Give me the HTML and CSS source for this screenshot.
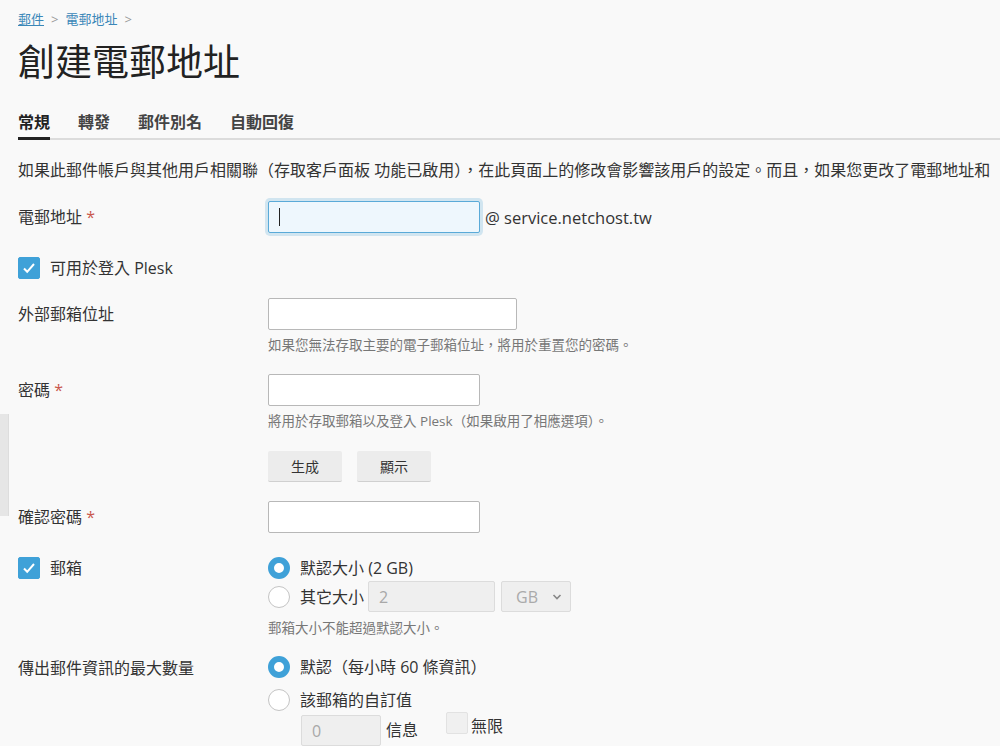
FILE: index.html
```html
<!DOCTYPE html>
<html lang="zh-Hant">
  <head>
    <meta charset="UTF-8" />
    <meta name="viewport" content="width=device-width, initial-scale=1.0" />
    <title>創建電郵地址</title>
    <link rel="stylesheet" href="styles.css">
  </head>
  <body>
    <div class="side-toggle"></div>
    <div class="page">
      <div class="breadcrumb">
        <a href="#" class="crumb underline">郵件</a>
        <span class="sep">&gt;</span>
        <a href="#" class="crumb">電郵地址</a>
        <span class="sep">&gt;</span>
      </div>
      <h1 class="title">創建電郵地址</h1>

      <div class="tabs">
        <span class="tab active">常規</span>
        <span class="tab">轉發</span>
        <span class="tab">郵件別名</span>
        <span class="tab">自動回復</span>
      </div>

      <p class="intro">如果此郵件帳戶與其他用戶相關聯（存取客戶面板 功能已啟用），在此頁面上的修改會影響該用戶的設定。而且，如果您更改了電郵地址和</p>

      <div class="row row-email">
        <div class="label">電郵地址 <span class="req">*</span></div>
        <div class="field inline">
          <div class="input focus"><span class="caret"></span></div>
          <span class="domain">@ service.netchost.tw</span>
        </div>
      </div>

      <div class="row row-check">
        <span class="checkbox checked">
          <svg width="16" height="16" viewBox="0 0 16 16"><path d="M3 8.5l3.2 3.3L13 4" fill="none" stroke="#fff" stroke-width="2"/></svg>
        </span>
        <span class="check-label">可用於登入 Plesk</span>
      </div>

      <div class="row row-ext">
        <div class="label">外部郵箱位址</div>
        <div class="field">
          <div class="input wide"></div>
          <div class="hint">如果您無法存取主要的電子郵箱位址，將用於重置您的密碼。</div>
        </div>
      </div>

      <div class="row row-pass">
        <div class="label">密碼 <span class="req">*</span></div>
        <div class="field">
          <div class="input"></div>
          <div class="hint">將用於存取郵箱以及登入 Plesk（如果啟用了相應選項）。</div>
          <div class="buttons">
            <button class="btn">生成</button>
            <button class="btn">顯示</button>
          </div>
        </div>
      </div>

      <div class="row row-confirm">
        <div class="label">確認密碼 <span class="req">*</span></div>
        <div class="field">
          <div class="input"></div>
        </div>
      </div>

      <div class="row row-mailbox">
        <div class="label check-row">
          <span class="checkbox checked">
            <svg width="16" height="16" viewBox="0 0 16 16"><path d="M3 8.5l3.2 3.3L13 4" fill="none" stroke="#fff" stroke-width="2"/></svg>
          </span>
          <span class="check-label">郵箱</span>
        </div>
        <div class="field">
          <div class="option">
            <span class="radio on"></span>
            <span>默認大小 (2 GB)</span>
          </div>
          <div class="option option-size">
            <span class="radio"></span>
            <span>其它大小</span>
            <div class="input disabled size-input">2</div>
            <div class="select disabled">
              <span>GB</span>
              <svg width="10" height="8" viewBox="0 0 10 8"><path d="M1.5 2l3.5 3.5L8.5 2" fill="none" stroke="#888" stroke-width="1.6"/></svg>
            </div>
          </div>
          <div class="hint">郵箱大小不能超過默認大小。</div>
        </div>
      </div>

      <div class="row row-outgoing">
        <div class="label">傳出郵件資訊的最大數量</div>
        <div class="field">
          <div class="option">
            <span class="radio on"></span>
            <span>默認（每小時 60 條資訊）</span>
          </div>
          <div class="option option-custom">
            <span class="radio"></span>
            <span>該郵箱的自訂值</span>
          </div>
          <div class="limit">
            <div class="input disabled limit-input">0</div>
            <span class="limit-unit">信息</span>
            <span class="checkbox small"></span>
            <span class="unlimited">無限</span>
          </div>
        </div>
      </div>
    </div>
  </body>
</html>
```

FILE: styles.css
```css
body {
  margin: 0;
  padding: 0;
  background: #f9f9f9;
  color: #333;
  font-family: "Open Sans", "Noto Sans CJK TC", sans-serif;
  height: 746px;
  overflow: hidden;
}

.side-toggle {
  position: absolute;
  left: 0;
  top: 414px;
  width: 8px;
  height: 102px;
  background: #e6e6e6;
  border-right: 1px solid #ddd;
}

.page {
  padding: 10px 0 0 18px;
}

.breadcrumb {
  font-size: 13px;
  line-height: 18px;
  display: flex;
  gap: 7px;
}

.crumb {
  color: #3a87b8;
  text-decoration: none;
}

.crumb.underline {
  text-decoration: underline;
}

.sep {
  color: #999;
}

.title {
  margin: 12px 0 0;
  font-size: 37px;
  line-height: 44px;
  font-weight: 400;
  color: #222;
}

.tabs {
  margin-top: 27px;
  display: flex;
  gap: 28px;
  border-bottom: 2px solid #dcdcdc;
}

.tab {
  font-size: 16px;
  line-height: 22px;
  padding-bottom: 5px;
  color: #444;
  font-weight: 600;
  position: relative;
}

.tab.active {
  color: #222;
}

.tab.active::after {
  content: "";
  position: absolute;
  left: 0;
  right: 0;
  bottom: -2px;
  height: 3px;
  background: #222;
}

.intro {
  margin: 19px 0 0;
  font-size: 16px;
  line-height: 22px;
  white-space: nowrap;
  color: #333;
}

.row {
  display: flex;
}

.label {
  width: 250px;
  flex-shrink: 0;
  font-size: 16px;
  line-height: 32px;
  color: #333;
}

.req {
  color: #c9574c;
}

.field {
  display: flex;
  flex-direction: column;
}

.field.inline {
  flex-direction: row;
  align-items: center;
}

.input {
  box-sizing: border-box;
  width: 212px;
  height: 32px;
  background: #fff;
  border: 1px solid #b8b8b8;
  border-radius: 2px;
  font-size: 16px;
  line-height: 30px;
  padding: 0 10px;
}

.input.wide {
  width: 249px;
}

.input.focus {
  background: #eef7fd;
  border-color: #5aaad8;
  box-shadow: 0 0 0 3px rgba(90, 170, 216, 0.25);
  display: flex;
  align-items: center;
}

.caret {
  width: 1px;
  height: 18px;
  background: #222;
}

.input.disabled {
  background: #efefef;
  border-color: #dcdcdc;
  color: #a8a8a8;
}

.domain {
  font-size: 16.5px;
  margin-left: 5px;
  color: #333;
}

.row-email {
  margin-top: 20px;
}

.row-check {
  margin-top: 24px;
  align-items: center;
}

.checkbox {
  box-sizing: border-box;
  width: 22px;
  height: 22px;
  border-radius: 2px;
  display: inline-flex;
  align-items: center;
  justify-content: center;
  background: #fff;
  border: 1px solid #ccc;
}

.checkbox.checked {
  background: #3fa1d8;
  border-color: #3fa1d8;
}

.check-label {
  font-size: 16px;
  line-height: 22px;
  margin-left: 10px;
}

.row-ext {
  margin-top: 19px;
}

.hint {
  margin-top: 7px;
  font-size: 13.5px;
  line-height: 16px;
  color: #777;
}

.row-pass {
  margin-top: 21px;
}

.buttons {
  margin-top: 22px;
  display: flex;
  gap: 15px;
}

.btn {
  font-family: inherit;
  width: 74px;
  height: 31px;
  font-size: 14px;
  color: #333;
  background: #ececec;
  border: none;
  border-bottom: 1px solid #d0d0d0;
  border-radius: 2px;
  padding: 0;
}

.row-confirm {
  margin-top: 19px;
}

.row-mailbox {
  margin-top: 24px;
}

.check-row {
  display: flex;
  align-items: center;
  height: 22px;
  line-height: 22px;
}

.option {
  display: flex;
  align-items: center;
  font-size: 16px;
  line-height: 22px;
  gap: 10px;
}

.radio {
  box-sizing: border-box;
  width: 22px;
  height: 22px;
  border-radius: 50%;
  background: #fff;
  border: 1px solid #c4c4c4;
  flex-shrink: 0;
}

.radio.on {
  border: 6px solid #3fa1d8;
}

.option-size {
  margin-top: 2px;
  gap: 0;
}

.option-size > span:nth-child(2) {
  margin-left: 10px;
  margin-right: 4px;
}

.size-input {
  width: 127px;
  height: 31px;
  padding: 0 10px;
  color: #aaa;
}

.select {
  box-sizing: border-box;
  margin-left: 6px;
  width: 70px;
  height: 31px;
  border: 1px solid #dcdcdc;
  background: #efefef;
  border-radius: 2px;
  display: flex;
  align-items: center;
  justify-content: space-between;
  padding: 0 8px 0 14px;
  color: #aaa;
  font-size: 16px;
}

.row-mailbox .hint {
  margin-top: 8px;
}

.row-outgoing {
  margin-top: 20px;
}

.row-outgoing .label {
  line-height: 32px;
  margin-top: -4px;
}

.option-custom {
  margin-top: 11px;
}

.limit {
  margin-top: 4px;
  margin-left: 33px;
  display: flex;
  align-items: flex-start;
}

.limit-input {
  width: 80px;
  height: 31px;
  color: #aaa;
}

.limit-unit {
  font-size: 16px;
  line-height: 31px;
  margin: 0 0 0 5px;
}

.checkbox.small {
  margin-left: 28px;
  margin-top: -3px;
  background: #f0f0f0;
  border-color: #e2e2e2;
}

.unlimited {
  font-size: 16px;
  line-height: 22px;
  margin-left: 3px;
}
```
